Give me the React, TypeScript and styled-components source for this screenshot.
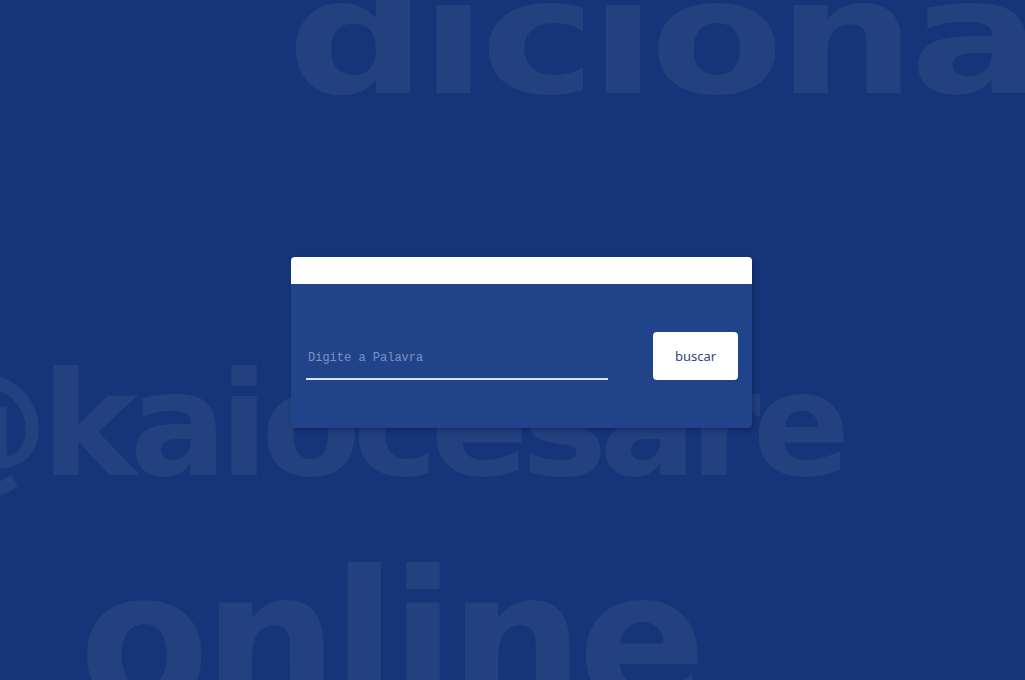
import React, { useState } from "react";
import styled, { createGlobalStyle } from "styled-components";

const GlobalStyle = createGlobalStyle`
  * {
    box-sizing: border-box;
  }

  html,
  body {
    margin: 0;
    padding: 0;
    background-color: #163579;
    overflow: hidden;
  }
`;

const PageSC = styled.main`
  position: relative;
  width: 100%;
  height: 100vh;
  display: flex;
  align-items: center;
  justify-content: center;
  padding-left: 18px;
  padding-top: 5px;
  overflow: hidden;
`;

// big watermark words behind the card
const BackdropSC = styled.div`
  position: absolute;
  inset: 0;
  display: flex;
  flex-direction: column;
  align-items: flex-start;
  pointer-events: none;
  user-select: none;
  font-family: "DejaVu Sans", sans-serif;
  font-weight: bold;
  line-height: 1;
  color: #23407f;
  white-space: nowrap;
`;

type BackdropWordProps = {
  size: number;
  spacing: number;
  indent: number;
  gapAbove: number;
  squash?: number;
};

const BackdropWordSC = styled.div<BackdropWordProps>`
  font-size: ${(props) => props.size}px;
  letter-spacing: ${(props) => props.spacing}px;
  margin-left: ${(props) => props.indent}px;
  margin-top: ${(props) => props.gapAbove}px;
  transform: scaleY(${(props) => props.squash ?? 1});
  transform-origin: 0 ${(props) => Math.round(props.size * 0.846)}px;
`;

const CardSC = styled.section`
  position: relative;
  width: 461px;
  background-color: #21438a;
  border-radius: 4px;
  overflow: hidden;
  box-shadow: 2px 3px 5px rgba(8, 20, 60, 0.35);
`;

const CardHeaderSC = styled.header`
  height: 27px;
  background-color: #ffffff;
`;

const SearchRowSC = styled.form`
  display: flex;
  align-items: flex-end;
  justify-content: space-between;
  padding: 48px 14px 48px 15px;
`;

const WordInputSC = styled.input`
  width: 302px;
  height: 48px;
  border: none;
  border-bottom: 2px solid #d9e4fb;
  background: transparent;
  outline: none;
  padding: 6px 2px 0;
  color: #ffffff;
  font-family: "Liberation Mono", "Courier New", monospace;
  font-size: 12px;

  &::placeholder {
    color: #7d90c2;
  }
`;

const SearchButtonSC = styled.button`
  width: 85px;
  height: 48px;
  border: none;
  border-radius: 4px;
  background-color: #ffffff;
  color: #34457d;
  font-family: "Noto Sans", "Open Sans", sans-serif;
  font-size: 13px;
  cursor: pointer;
`;

const App: React.FC = () => {
  const [word, setWord] = useState("");

  return (
    <>
      <GlobalStyle />
      <PageSC>
        <BackdropSC aria-hidden>
          <BackdropWordSC
            size={195}
            spacing={-6.5}
            indent={287}
            gapAbove={-72}
            squash={0.825}
          >
            dicionario
          </BackdropWordSC>
          <BackdropWordSC size={145} spacing={-8} indent={-96} gapAbove={229}>
            @kaiocesare
          </BackdropWordSC>
          <BackdropWordSC size={190} spacing={-6.5} indent={79} gapAbove={50}>
            online
          </BackdropWordSC>
        </BackdropSC>

        <CardSC>
          <CardHeaderSC />
          <SearchRowSC onSubmit={(e) => e.preventDefault()}>
            <WordInputSC
              placeholder="Digite a Palavra"
              value={word}
              onChange={(e) => setWord(e.target.value)}
            />
            <SearchButtonSC type="submit">buscar</SearchButtonSC>
          </SearchRowSC>
        </CardSC>
      </PageSC>
    </>
  );
};

export default App;
